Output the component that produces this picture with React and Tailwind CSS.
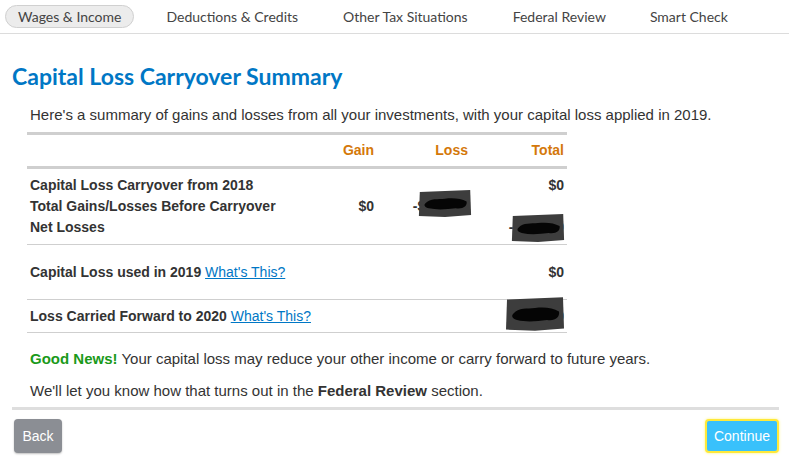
import React from "react";

const tabs = ["Wages & Income", "Deductions & Credits", "Other Tax Situations", "Federal Review", "Smart Check"];

// scribbled-out amount: grey patch with a black marker stroke on top
const Scribble = ({ w, h, className }) => (
    <svg width={w} height={h} viewBox="0 0 60 30" preserveAspectRatio="none" className={className}>
        <path d="M2 3 L58 1 L59 27 L30 29 L1 28 Z" fill="#3d3d3d" />
        <path d="M8 15 C14 9 22 11 30 10 C40 9 48 10 54 13 C55 18 50 21 42 20 C32 21 22 22 12 20 C8 19 6 17 8 15 Z" fill="#050505" />
    </svg>
);

const WhatsThis = () => (
    <a href="#" className="font-normal text-[#0077c5] underline">What's This?</a>
);

export default function App() {
    return (
        <div className="w-[789px] h-[463px] bg-white overflow-hidden text-[#333]">
            <div className="flex items-center h-[34px] border-b border-[#dcdcdc] font-['Lato',sans-serif] text-[14px] text-[#444]">
                <div className="ml-[5px] h-[23px] px-[12px] flex items-center rounded-full border border-[#d0d0d0] bg-[#ececec]">{tabs[0]}</div>
                <div className="ml-[32px]">{tabs[1]}</div>
                <div className="ml-[45px]">{tabs[2]}</div>
                <div className="ml-[45px]">{tabs[3]}</div>
                <div className="ml-[44px]">{tabs[4]}</div>
            </div>

            <h1 className="mt-[28px] ml-[12px] font-['Lato',sans-serif] font-bold text-[23px] leading-[28px] text-[#0077c5]">
                Capital Loss Carryover Summary
            </h1>

            <div className="ml-[27px] font-['Liberation_Sans',Arial,sans-serif]">
                <p className="mt-[15px] ml-[3px] text-[15px] leading-[20px]">
                    Here's a summary of gains and losses from all your investments, with your capital loss applied in 2019.
                </p>

                <div className="mt-[7px] w-[540px] text-[14px] font-bold">
                    <div className="grid grid-cols-[1fr_96px_94px_96px] px-[3px] h-[37px] items-center border-y-[3px] border-[#cfcfcf] text-[#d4780a]">
                        <div />
                        <div className="text-right">Gain</div>
                        <div className="text-right">Loss</div>
                        <div className="text-right">Total</div>
                    </div>

                    <div className="grid grid-cols-[1fr_96px_94px_96px] px-[3px] pt-[6px] pb-[6px] leading-[21px] border-b border-[#cfcfcf]">
                        <div>
                            <div>Capital Loss Carryover from 2018</div>
                            <div>Total Gains/Losses Before Carryover</div>
                            <div>Net Losses</div>
                        </div>
                        <div className="flex items-center justify-end">$0</div>
                        <div className="flex items-center justify-end">
                            <span className="relative">
                                <span>-$00,000</span>
                                <Scribble w={54} h={29} className="absolute -right-[4px] -top-[7px]" />
                            </span>
                        </div>
                        <div className="flex flex-col items-end justify-between">
                            <div>$0</div>
                            <span className="relative">
                                <span>-$00,000</span>
                                <Scribble w={54} h={30} className="absolute -right-[1px] -top-[4px]" />
                            </span>
                        </div>
                    </div>

                    <div className="grid grid-cols-[1fr_96px] px-[3px] h-[55px] items-center border-b border-[#cfcfcf]">
                        <div>Capital Loss used in 2019 <WhatsThis /></div>
                        <div className="text-right">$0</div>
                    </div>

                    <div className="grid grid-cols-[1fr_96px] px-[3px] h-[33px] items-center border-b border-[#cfcfcf]">
                        <div>Loss Carried Forward to 2020 <WhatsThis /></div>
                        <div className="flex justify-end">
                            <span className="relative">
                                <span>-$00,000</span>
                                <Scribble w={60} h={36} className="absolute -right-[1px] -top-[10px]" />
                            </span>
                        </div>
                    </div>
                </div>

                <p className="mt-[16px] ml-[3px] text-[15px] leading-[20px]">
                    <span className="font-bold text-[#1a9a1a]">Good News!</span> Your capital loss may reduce your other income or carry forward to future years.
                </p>
                <p className="mt-[12px] ml-[3px] text-[15px] leading-[20px]">
                    We'll let you know how that turns out in the <span className="font-bold">Federal Review</span> section.
                </p>
            </div>

            <div className="ml-[12px] mr-[10px] mt-[6px] border-t-[3px] border-[#dedede] flex justify-between pt-[9px] font-['Liberation_Sans',Arial,sans-serif] text-[14px] text-white">
                <button className="ml-[2px] w-[48px] h-[34px] rounded-[4px] bg-[#8b8e94] shadow-[0_1px_2px_rgba(0,0,0,0.25)]">Back</button>
                <button className="w-[74px] h-[34px] rounded-[4px] bg-[#39c1fb] border-2 border-[#ffe93a] shadow-[0_0_3px_#fff27a]">Continue</button>
            </div>
        </div>
    );
}
